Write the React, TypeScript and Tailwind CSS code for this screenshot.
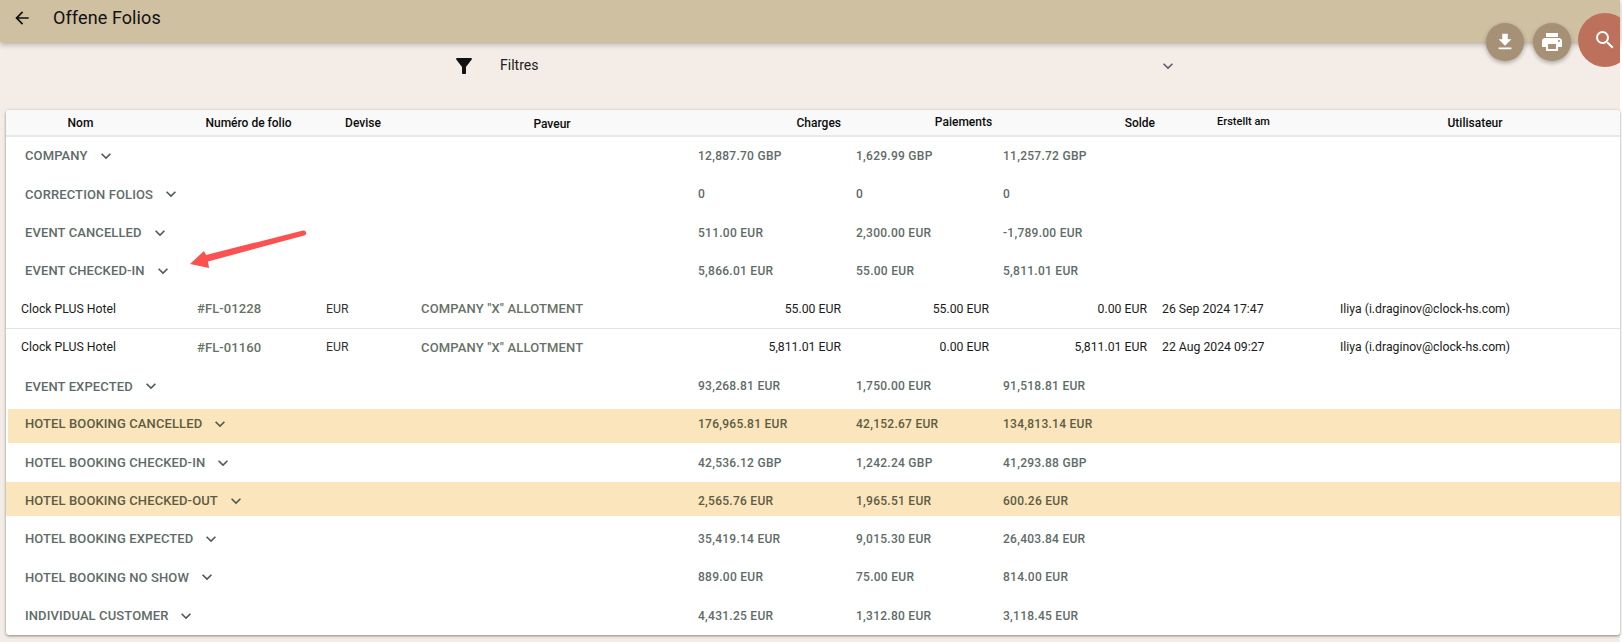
import { MdArrowBack, MdFileDownload, MdFilterAlt, MdKeyboardArrowDown, MdPrint, MdSearch } from "react-icons/md";

interface GroupRow {
  kind: "group";
  label: string;
  charges: string;
  payments: string;
  balance: string;
  band?: "first" | "second";
}

interface FolioRow {
  kind: "folio";
  folio: string;
  charges: string;
  payments: string;
  balance: string;
  date: string;
  divider?: boolean;
}

const rows: (GroupRow | FolioRow)[] = [
  { kind: "group", label: "COMPANY", charges: "12,887.70 GBP", payments: "1,629.99 GBP", balance: "11,257.72 GBP" },
  { kind: "group", label: "CORRECTION FOLIOS", charges: "0", payments: "0", balance: "0" },
  { kind: "group", label: "EVENT CANCELLED", charges: "511.00 EUR", payments: "2,300.00 EUR", balance: "-1,789.00 EUR" },
  { kind: "group", label: "EVENT CHECKED-IN", charges: "5,866.01 EUR", payments: "55.00 EUR", balance: "5,811.01 EUR" },
  { kind: "folio", folio: "#FL-01228", charges: "55.00 EUR", payments: "55.00 EUR", balance: "0.00 EUR", date: "26 Sep 2024 17:47", divider: true },
  { kind: "folio", folio: "#FL-01160", charges: "5,811.01 EUR", payments: "0.00 EUR", balance: "5,811.01 EUR", date: "22 Aug 2024 09:27" },
  { kind: "group", label: "EVENT EXPECTED", charges: "93,268.81 EUR", payments: "1,750.00 EUR", balance: "91,518.81 EUR" },
  { kind: "group", label: "HOTEL BOOKING CANCELLED", charges: "176,965.81 EUR", payments: "42,152.67 EUR", balance: "134,813.14 EUR", band: "first" },
  { kind: "group", label: "HOTEL BOOKING CHECKED-IN", charges: "42,536.12 GBP", payments: "1,242.24 GBP", balance: "41,293.88 GBP" },
  { kind: "group", label: "HOTEL BOOKING CHECKED-OUT", charges: "2,565.76 EUR", payments: "1,965.51 EUR", balance: "600.26 EUR", band: "second" },
  { kind: "group", label: "HOTEL BOOKING EXPECTED", charges: "35,419.14 EUR", payments: "9,015.30 EUR", balance: "26,403.84 EUR" },
  { kind: "group", label: "HOTEL BOOKING NO SHOW", charges: "889.00 EUR", payments: "75.00 EUR", balance: "814.00 EUR" },
  { kind: "group", label: "INDIVIDUAL CUSTOMER", charges: "4,431.25 EUR", payments: "1,312.80 EUR", balance: "3,118.45 EUR" },
];

function Group({ row }: { row: GroupRow }) {
  // the two coloured bands do not sit centred on their rows in the reference
  const wrap = row.band === "first" ? "pt-[3px]" : row.band === "second" ? "pt-0" : "pt-[2px]";
  const band =
    row.band === "first"
      ? "ml-[2px] pb-[3px] pl-[17px] bg-[#fae5bc] text-[#5e5c43]"
      : row.band === "second"
        ? "-mt-[1px] pt-[5px] pl-[19px] bg-[#fae5bc] text-[#5e5c43]"
        : "ml-[2px] pl-[17px] text-[#5f6b69]";
  return (
    <div className={`h-[38.4px] ${wrap}`}>
      <div className={`grid h-[34px] grid-cols-[673px_158px_1fr] items-center text-[12px] font-medium tracking-[0.27px] ${band}`}>
        <div className="flex items-center text-[13px] tracking-[0.11px]">
          <span>{row.label}</span>
          <MdKeyboardArrowDown className="ml-[8px] text-[#4d5a50]" size={20} />
        </div>
        <span>{row.charges}</span>
        <div className="grid grid-cols-[147px_1fr]">
          <span>{row.payments}</span>
          <span>{row.balance}</span>
        </div>
      </div>
    </div>
  );
}

function Folio({ row }: { row: FolioRow }) {
  return (
    <div
      className={`grid h-[38.4px] grid-cols-[176px_129px_95px_300px_120px_148px_158px_193px_1fr] items-center pb-[1px] pl-[15px] text-[12.25px] text-[#1b1b1b] ${
        row.divider ? "border-b border-[#e2e2e2]" : ""
      }`}
    >
      <span>Clock PLUS Hotel</span>
      <span className="text-[13px] font-medium tracking-[0.1px] text-[#667168]">{row.folio}</span>
      <span className="text-[#333]">EUR</span>
      <span className="text-[13px] font-medium tracking-[0.15px] text-[#667168]">COMPANY "X" ALLOTMENT</span>
      <span className="text-right">{row.charges}</span>
      <span className="text-right">{row.payments}</span>
      <span className="text-right">{row.balance}</span>
      <span className="pl-[15px]">{row.date}</span>
      <span>Iliya (i.draginov@clock-hs.com)</span>
    </div>
  );
}

export default function App() {
  return (
    <div className="relative h-[642px] w-[1622px] overflow-hidden bg-white font-['Roboto',sans-serif]">
      <div className="h-full w-[1620px] bg-[#f4ece6]">
        <header className="flex h-[42px] items-center bg-[#cec0a1] pb-[6px] pl-[12px] shadow-[0_2px_6px_rgba(0,0,0,0.3)]">
          <MdArrowBack className="text-[#111]" size={20} />
          <h1 className="ml-[21px] text-[18px] leading-none tracking-[0.1px] text-[#111]">Offene Folios</h1>
        </header>

        <div className="flex h-[46px] items-center pt-[1px]">
          <MdFilterAlt className="ml-[452px] text-[#111]" size={24} />
          <span className="ml-[24px] text-[14px] text-[#222]">Filtres</span>
          <MdKeyboardArrowDown className="ml-[620px] text-[#59616b]" size={20} />
        </div>

        <main className="ml-[6px] mt-[22px] overflow-hidden rounded-[3px] bg-white shadow-[0_1px_3px_rgba(0,0,0,0.45)]">
          <div className="grid h-[27px] grid-cols-[149px_187px_42px_336px_121px_245px_69px_177px_286px] items-center border-b-2 border-[#e8e8e8] bg-[#f9f9f9] text-center text-[12px] font-medium text-[#0c0c0c]">
            <span>Nom</span>
            <span className="mt-[1px]">Numéro de folio</span>
            <span className="mt-[1px] whitespace-nowrap">Devise</span>
            <span className="mt-[3px]">Paveur</span>
            <span className="text-right">Charges</span>
            <span className="mb-[2px]">Paiements</span>
            <span className="text-right">Solde</span>
            <span className="mb-[1px] text-[11px]">Erstellt am</span>
            <span>Utilisateur</span>
          </div>
          {rows.map((row, i) =>
            row.kind === "group" ? <Group key={i} row={row} /> : <Folio key={i} row={row} />,
          )}
        </main>
      </div>

      {/* annotation arrow */}
      <svg className="absolute left-[185px] top-[225px]" width="125" height="50" viewBox="0 0 125 50" fill="none">
        <path d="M118 5.5 a2.5 2.5 0 0 1 1.2 5 L23 36.5 L24 43 L5 39 L19 26 L21 30 Z" fill="#fb5150" />
      </svg>

      <button className="absolute left-[1486px] top-[23px] flex h-[38px] w-[38px] items-center justify-center rounded-full bg-[#a69176] text-white shadow-[0_2px_4px_rgba(0,0,0,0.3)]">
        <MdFileDownload size={22} />
      </button>
      <button className="absolute left-[1533px] top-[23px] flex h-[38px] w-[38px] items-center justify-center rounded-full bg-[#a69176] text-white shadow-[0_2px_4px_rgba(0,0,0,0.3)]">
        <MdPrint size={24} />
      </button>
      <div className="absolute left-[1578px] top-[13px] h-[54px] w-[42px] overflow-hidden">
        <button className="flex h-[54px] w-[54px] items-center justify-center rounded-full bg-[#bd705b] text-white">
          <MdSearch size={24} />
        </button>
      </div>
    </div>
  );
}
